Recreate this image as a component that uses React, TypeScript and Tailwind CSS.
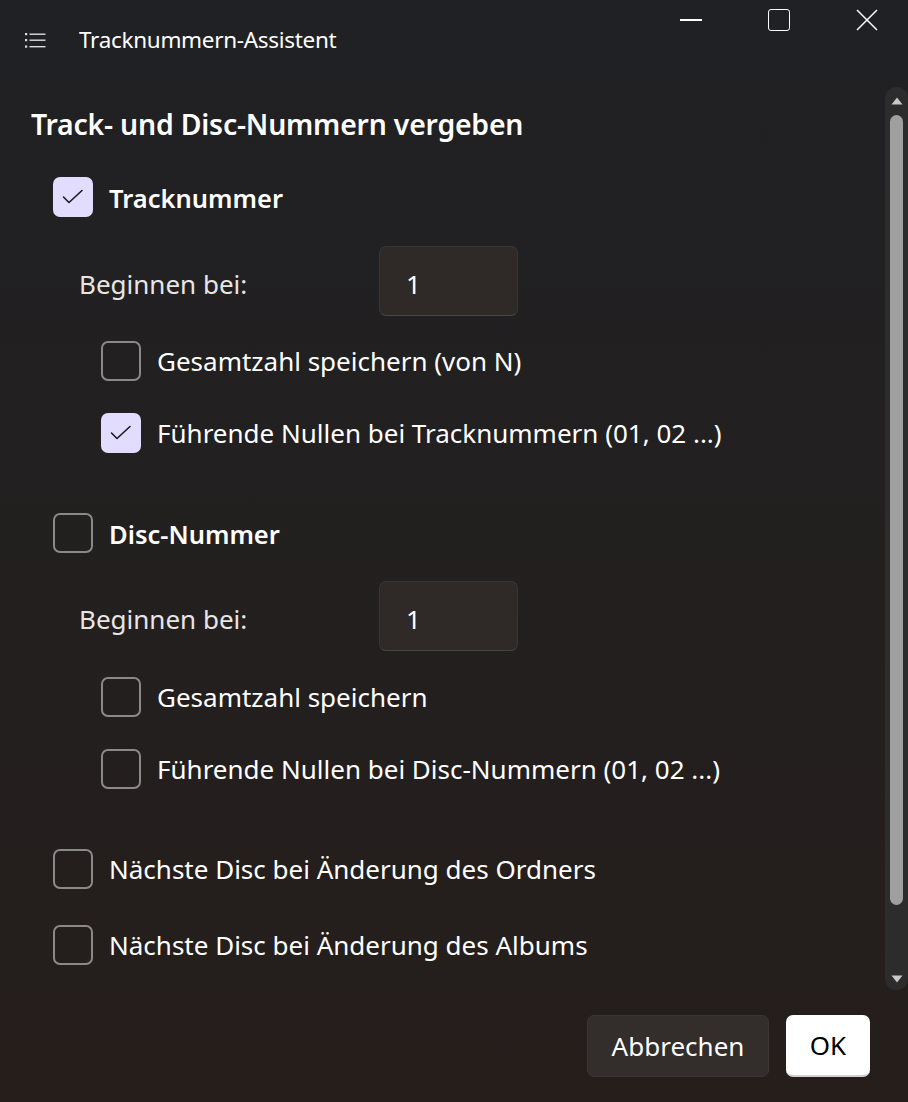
import React from "react";

const font = { fontFamily: '"Noto Sans", "Open Sans", sans-serif' };

function Check({ checked }: { checked: boolean }) {
  return checked ? (
    <div className="w-[40px] h-[40px] shrink-0 rounded-[7px] bg-[#e2dcff]">
      <svg width="40" height="40" viewBox="0 0 40 40" fill="none">
        <path d="M10.5 20l5.5 5.5 13-12" stroke="#1a1a1a" strokeWidth="1.6" strokeLinecap="round" strokeLinejoin="round" />
      </svg>
    </div>
  ) : (
    <div className="w-[40px] h-[40px] shrink-0 rounded-[7px] border-2 border-[#8b8987] bg-transparent" />
  );
}

function CheckRow({ checked, label, bold }: { checked: boolean; label: string; bold?: boolean }) {
  return (
    <div className="flex items-center h-[40px] gap-[16px]">
      <Check checked={checked} />
      <span className={`leading-none text-white ${bold ? "text-[25.5px] font-semibold pt-[4px]" : "text-[26px] font-normal"}`}>{label}</span>
    </div>
  );
}

function StartRow() {
  return (
    <div className="flex items-center h-[70px] pl-[26px]">
      <span className="w-[300px] text-[26px] leading-none pt-[5px] text-[#e8e6e4]">Beginnen bei:</span>
      <div className="w-[139px] h-[70px] rounded-[7px] bg-[#2f2a28] border border-[#3a3533] border-b-[#4a4543] flex items-center pl-[26px] pt-[5px] text-[26px] leading-none text-white">
        1
      </div>
    </div>
  );
}

export default function App() {
  return (
    <div className="w-[908px] h-[1102px] bg-gradient-to-b from-[#202124] to-[#251e1b] flex flex-col text-white overflow-hidden" style={font}>
      {/* title bar */}
      <div className="flex h-[80px] shrink-0">
        <div className="flex items-center pl-[25px] gap-[33px] flex-1">
          <svg width="21" height="16" viewBox="0 0 21 16" fill="none">
            <rect x="0" y="1" width="2.2" height="2.2" fill="#ddd" />
            <rect x="0" y="7" width="2.2" height="2.2" fill="#ddd" />
            <rect x="0" y="13.5" width="2.2" height="2.2" fill="#ddd" />
            <rect x="4.5" y="1.5" width="16" height="1.4" fill="#ddd" />
            <rect x="4.5" y="7.5" width="16" height="1.4" fill="#ddd" />
            <rect x="4.5" y="14" width="16" height="1.4" fill="#ddd" />
          </svg>
          <span className="text-[22.5px] text-white tracking-[-0.3px]">Tracknummern-Assistent</span>
        </div>
        <div className="flex self-start pt-[9px] pr-[30px]">
          <div className="w-[22px] h-[22px] flex items-center mr-[66px]">
            <div className="w-[22px] h-[1.5px] bg-white" />
          </div>
          <div className="w-[22px] h-[22px] rounded-[3px] border-[1.5px] border-white mr-[66px]" />
          <svg width="22" height="22" viewBox="0 0 22 22">
            <path d="M1 1L21 21M21 1L1 21" stroke="white" strokeWidth="1.5" />
          </svg>
        </div>
      </div>

      {/* body */}
      <div className="flex flex-1 min-h-0">
        <div className="flex-1 pl-[31px] pt-[24px]">
          <h1 className="text-[28.4px] leading-[40px] font-semibold text-white tracking-[-0.2px]">Track- und Disc-Nummern vergeben</h1>
          <div className="pl-[22px] mt-[33px] flex flex-col">
            <CheckRow checked label="Tracknummer" bold />
            <div className="mt-[29px]"><StartRow /></div>
            <div className="pl-[48px] mt-[25px] flex flex-col gap-[32px]">
              <CheckRow checked={false} label="Gesamtzahl speichern (von N)" />
              <CheckRow checked label="Führende Nullen bei Tracknummern (01, 02 ...)" />
            </div>
            <div className="mt-[60px]"><CheckRow checked={false} label="Disc-Nummer" bold /></div>
            <div className="mt-[28px]"><StartRow /></div>
            <div className="pl-[48px] mt-[26px] flex flex-col gap-[32px]">
              <CheckRow checked={false} label="Gesamtzahl speichern" />
              <CheckRow checked={false} label="Führende Nullen bei Disc-Nummern (01, 02 ...)" />
            </div>
            <div className="mt-[60px] flex flex-col gap-[36px]">
              <CheckRow checked={false} label="Nächste Disc bei Änderung des Ordners" />
              <CheckRow checked={false} label="Nächste Disc bei Änderung des Albums" />
            </div>
          </div>
        </div>
        {/* scrollbar */}
        <div className="w-[23px] mt-[7px] h-[903px] rounded-[12px] bg-[#2c2c2c] flex flex-col items-center pt-[10px] pb-[7px]">
          <svg width="12" height="8" viewBox="0 0 12 8"><path d="M6 0.5L11.5 7.5H0.5Z" fill="#c8c8c8" /></svg>
          <div className="w-[13px] flex-1 mt-[10px] mb-[70px] rounded-full bg-[#9f9f9f]" />
          <svg width="12" height="8" viewBox="0 0 12 8"><path d="M0.5 0.5H11.5L6 7.5Z" fill="#c8c8c8" /></svg>
        </div>
      </div>

      {/* footer */}
      <div className="flex justify-end gap-[17px] pr-[38px] pb-[25px] pt-[23px] shrink-0">
        <button className="w-[182px] h-[62px] rounded-[7px] bg-[#332e2b] border border-[#3b3634] text-[26px] text-white">Abbrechen</button>
        <button className="w-[84px] h-[62px] rounded-[7px] bg-white border-b-2 border-[#d0d0d0] text-[26px] text-black">OK</button>
      </div>
    </div>
  );
}
